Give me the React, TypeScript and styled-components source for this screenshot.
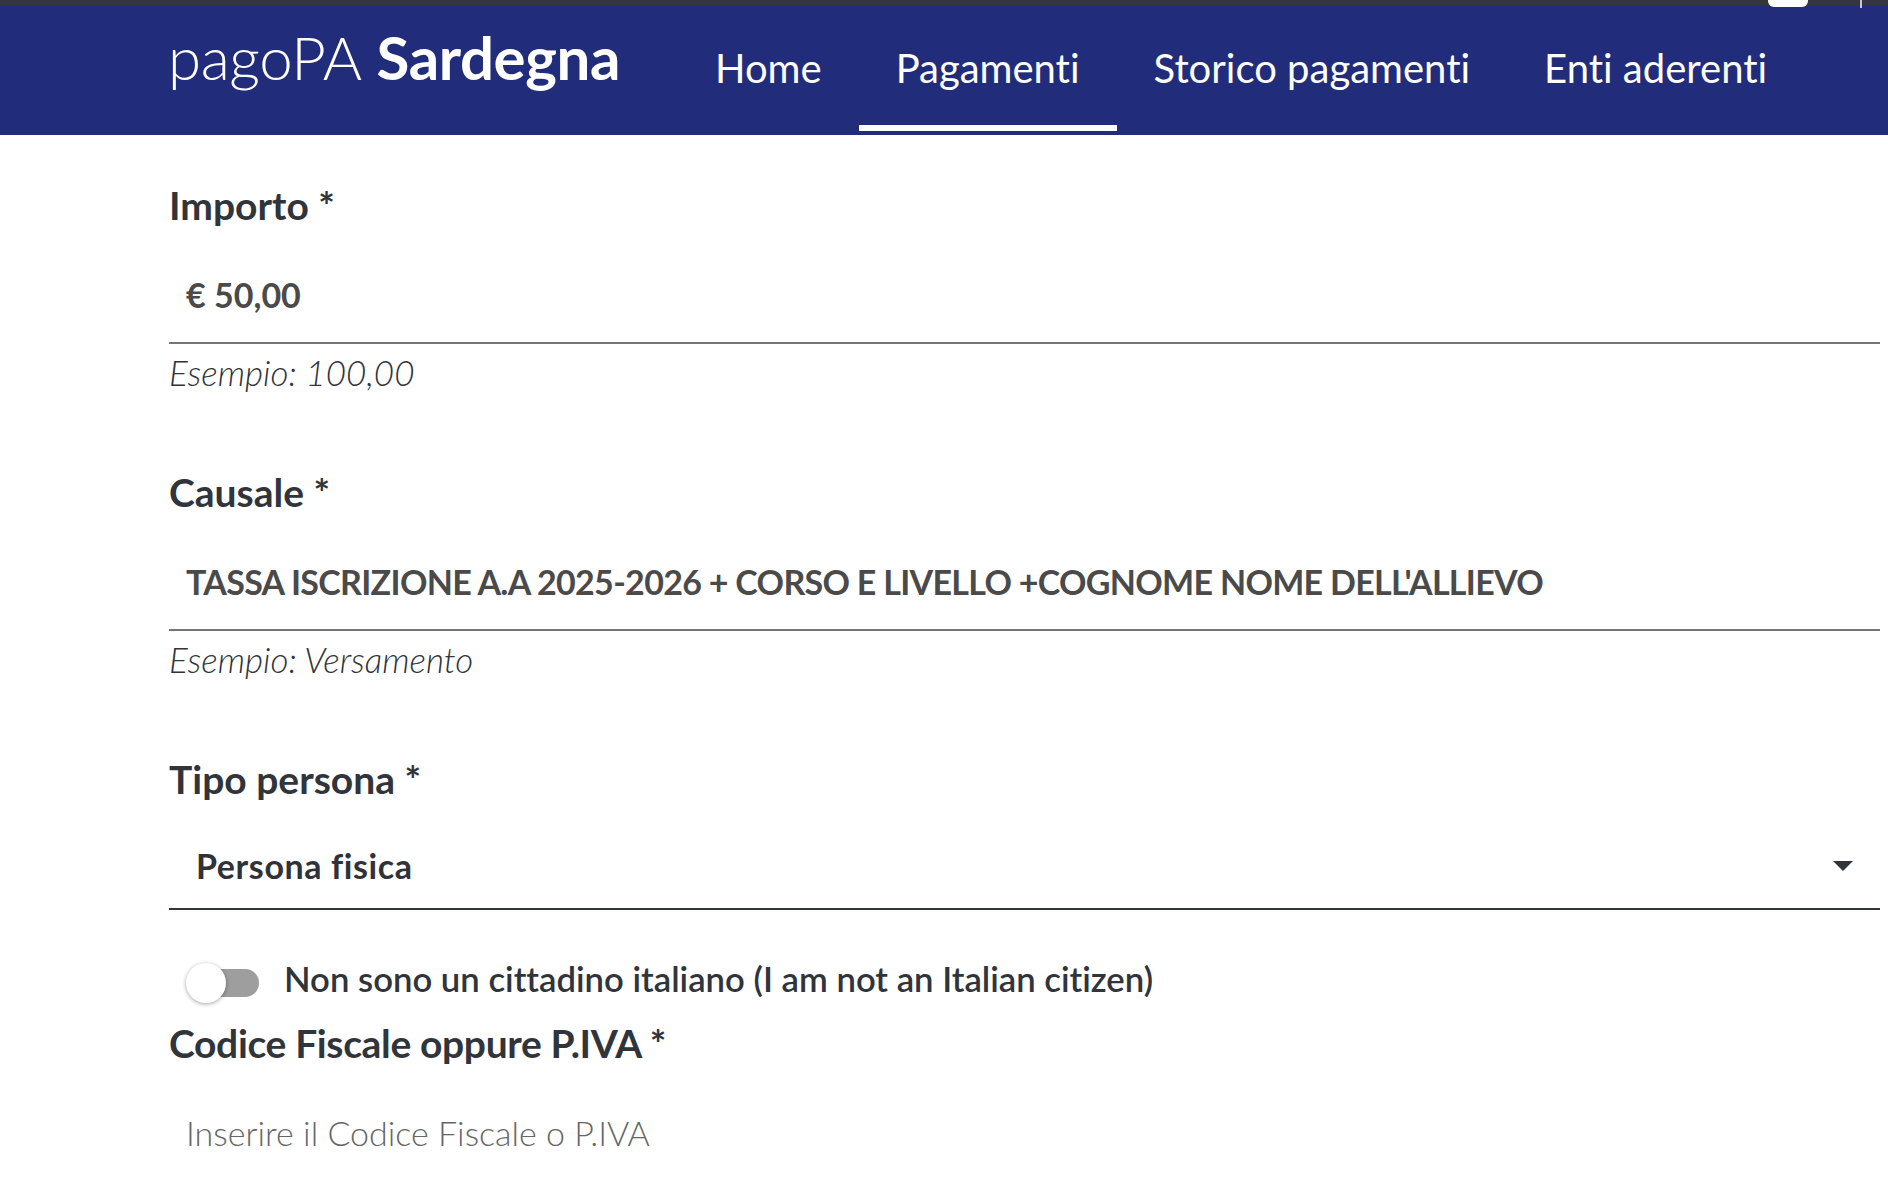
import React from "react";
import styled, { createGlobalStyle } from "styled-components";

const GlobalStyle = createGlobalStyle`
  html, body {
    margin: 0;
    padding: 0;
    background: #ffffff;
    overflow: hidden;
  }
  body {
    font-family: Lato, "Open Sans", "Liberation Sans", sans-serif;
    font-variant-ligatures: none;
    color: #30343b;
  }
  * {
    box-sizing: border-box;
  }
`;

const TopStrip = styled.div`
  height: 6px;
  background: #33363d;
  display: flex;
  justify-content: flex-end;
  align-items: flex-start;
  padding-right: 26px;
`;

const StripPill = styled.span`
  position: relative;
  z-index: 1;
  width: 40px;
  height: 7px;
  margin-right: 52px;
  background: #ffffff;
  border-radius: 0 0 6px 6px;
`;

const StripDivider = styled.span`
  position: relative;
  z-index: 1;
  width: 2px;
  height: 8px;
  background: #c9c9c9;
`;

const Header = styled.header`
  height: 129px;
  background: #212d7a;
  display: flex;
  align-items: stretch;
  padding-left: 168px;
`;

const Brand = styled.div`
  width: 450px;
  margin-top: 21px;
  font-size: 60px;
  line-height: 1;
  color: #ffffff;
  white-space: nowrap;
  letter-spacing: -0.4px;
`;

const BrandLight = styled.span`
  font-weight: 300;
`;

const BrandBold = styled.span`
  font-weight: 700;
`;

const Nav = styled.nav`
  display: flex;
  margin-left: 60px;
`;

const NavItem = styled.a<{ $active?: boolean }>`
  display: block;
  padding: 42px 37px 0;
  margin-bottom: 4px;
  border-bottom: 6px solid ${(p) => (p.$active ? "#ffffff" : "transparent")};
  font-size: 40px;
  line-height: 1;
  font-weight: 400;
  color: #ffffff;
  text-decoration: none;
  white-space: nowrap;
`;

const Form = styled.main`
  padding: 46px 8px 0 169px;
`;

const Field = styled.div`
  margin-bottom: 76px;
`;

const Label = styled.label<{ $tight?: boolean }>`
  display: block;
  font-size: 39px;
  line-height: 48px;
  font-weight: 700;
  color: #30343b;
  white-space: nowrap;
  letter-spacing: ${(p) => (p.$tight ? "-0.35px" : "0")};
`;

const TextInput = styled.input<{ $tight?: boolean }>`
  display: block;
  width: 100%;
  height: 97px;
  margin-top: 18px;
  padding: 0 0 0 17px;
  border: none;
  border-bottom: 2px solid #757575;
  border-radius: 0;
  outline: none;
  background: transparent;
  font-family: Lato, "Open Sans", sans-serif;
  font-variant-ligatures: none;
  font-size: 34px;
  font-weight: 700;
  letter-spacing: ${(p) => (p.$tight ? "-0.7px" : "0")};
  color: #4a4a4a;

  &::placeholder {
    font-weight: 300;
    color: #666666;
    opacity: 1;
  }
`;

const Hint = styled.div`
  margin-top: 8px;
  font-size: 35px;
  line-height: 40px;
  font-weight: 300;
  font-style: italic;
  color: #30343b;
`;

const SelectBox = styled.div`
  display: flex;
  align-items: center;
  justify-content: space-between;
  height: 87px;
  margin-top: 20px;
  padding: 0 27px;
  border-bottom: 2px solid #30343b;
  font-size: 34px;
  letter-spacing: 0.6px;
  font-weight: 700;
  color: #2f3239;
`;

const Caret = styled.svg`
  width: 20px;
  height: 10px;
  fill: #30343b;
`;

const ToggleRow = styled.div`
  display: flex;
  align-items: flex-start;
  margin-top: 49px;
  padding-left: 17px;
`;

const Toggle = styled.span`
  position: relative;
  display: block;
  width: 73px;
  height: 40px;
  margin-top: 4px;
  flex-shrink: 0;
`;

const ToggleTrack = styled.span`
  position: absolute;
  left: 8px;
  right: 0;
  top: 6px;
  height: 28px;
  border-radius: 14px;
  background: #9e9e9e;
`;

const ToggleKnob = styled.span`
  position: absolute;
  left: 0;
  top: 0;
  width: 40px;
  height: 40px;
  border-radius: 50%;
  background: #ffffff;
  box-shadow: 0 1px 4px rgba(0, 0, 0, 0.35);
`;

const ToggleLabel = styled.span`
  margin-left: 25px;
  font-size: 34.7px;
  line-height: 40px;
  font-weight: 600;
  color: #30343b;
  white-space: nowrap;
`;

const CodiceField = styled.div`
  margin-top: 16px;
`;

const navItems = ["Home", "Pagamenti", "Storico pagamenti", "Enti aderenti"];

export default function App() {
  return (
    <>
      <GlobalStyle />
      <TopStrip>
        <StripPill />
        <StripDivider />
      </TopStrip>
      <Header>
        <Brand>
          <BrandLight>pagoPA</BrandLight> <BrandBold>Sardegna</BrandBold>
        </Brand>
        <Nav>
          {navItems.map((item) => (
            <NavItem key={item} href="#" $active={item === "Pagamenti"}>
              {item}
            </NavItem>
          ))}
        </Nav>
      </Header>
      <Form>
        <Field>
          <Label>Importo *</Label>
          <TextInput readOnly defaultValue="€ 50,00" />
          <Hint>Esempio: 100,00</Hint>
        </Field>
        <Field>
          <Label>Causale *</Label>
          <TextInput
            $tight
            readOnly
            defaultValue="TASSA ISCRIZIONE A.A 2025-2026 + CORSO E LIVELLO +COGNOME NOME DELL'ALLIEVO"
          />
          <Hint>Esempio: Versamento</Hint>
        </Field>
        <div>
          <Label>Tipo persona *</Label>
          <SelectBox>
            <span>Persona fisica</span>
            <Caret viewBox="0 0 20 10">
              <path d="M0 0 L20 0 L10 10 Z" />
            </Caret>
          </SelectBox>
        </div>
        <ToggleRow>
          <Toggle>
            <ToggleTrack />
            <ToggleKnob />
          </Toggle>
          <ToggleLabel>Non sono un cittadino italiano (I am not an Italian citizen)</ToggleLabel>
        </ToggleRow>
        <CodiceField>
          <Label $tight>Codice Fiscale oppure P.IVA *</Label>
          <TextInput placeholder="Inserire il Codice Fiscale o P.IVA" />
        </CodiceField>
      </Form>
    </>
  );
}
